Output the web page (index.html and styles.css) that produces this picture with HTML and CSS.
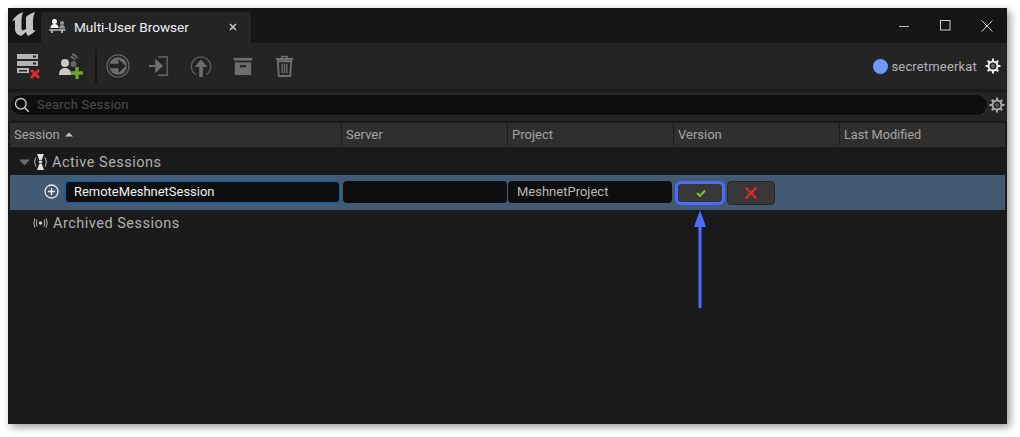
FILE: index.html
```html
<!DOCTYPE html>
<html lang="en">
<head>
<meta charset="utf-8">
<title>Multi-User Browser</title>
<link rel="stylesheet" href="styles.css">
</head>
<body>
<div class="window">
  <div class="titlebar">
    <svg class="ue-logo" width="26" height="26" viewBox="0 0 26 26"><path d="M1 11C3 6 7 3 12 1C11 4 10.500 6 10.500 9V17C10.500 19 11.500 20 13 19L15 18V6C17 4 20 2 24 1C23 4 22 6 22 9V18C22 19 23 20 25 19C23 22 19 24 17 25C16 24 15.500 23 15 21C13 23 11 24 10 25C5 23 4 21 4 17V9C3 9 2 10 1 11Z" fill="#c2c2c2"/></svg>
    <div class="tab">
      <svg class="tab-icon" width="18" height="18" viewBox="0 0 18 18"><circle cx="5.500" cy="3.500" r="2.500" fill="#fff"/><path d="M1.500 10c0-3 2-4 4-4s4 1 4 4z" fill="#fff"/><circle cx="13" cy="5" r="2" fill="#9a9a9a"/><path d="M10 10.500c0-2.500 1.500-3.500 3-3.500s3 1 3 3.500z" fill="#9a9a9a"/><path d="M0 12h16.500M3 12v3M13 12v3" stroke="#fff" stroke-width="1.200" fill="none"/></svg>
      <span class="tab-label">Multi-User Browser</span>
      <svg class="tab-close" width="8" height="8" viewBox="0 0 8 8"><path d="M1 1l6 6M7 1l-6 6" stroke="#c4c4c4" stroke-width="1.600"/></svg>
    </div>
    <div class="window-controls">
      <svg width="12" height="12" viewBox="0 0 12 12"><path d="M0 6.500h10" stroke="#bbb" stroke-width="1"/></svg>
      <svg width="12" height="12" viewBox="0 0 12 12"><rect x=".5" y=".5" width="9.500" height="9.500" fill="none" stroke="#ccc" stroke-width="1"/></svg>
      <svg width="12" height="12" viewBox="0 0 12 12"><path d="M.5.500l11 11M11.500.500l-11 11" stroke="#ccc" stroke-width="1"/></svg>
    </div>
  </div>
  <div class="toolbar">
    <svg class="tool t-first" width="26" height="26" viewBox="0 0 26 26"><g fill="#b4b4b4"><rect x="1" y="1" width="21" height="5"/><rect x="1" y="8" width="21" height="5"/><rect x="1" y="15" width="12" height="5"/></g><g fill="#242424"><rect x="17" y="2.500" width="3" height="2"/><rect x="17" y="9.500" width="3" height="2"/><rect x="3" y="17" width="8" height="1.500"/></g><path d="M15 17l8 8M23 17l-8 8" stroke="#e02b2b" stroke-width="2.800"/></svg>
    <svg class="tool t-second" width="26" height="26" viewBox="0 0 26 26"><path d="M14 1.500c2.500 0 4.500 1.500 5 4M12.500 4c2 0 3.500 1 4 3" stroke="#666" stroke-width="2" fill="none"/><circle cx="15.500" cy="11" r="3" fill="#666"/><circle cx="7" cy="10" r="4" fill="#c8c8c8"/><path d="M1 22c0-5 2.500-7 6-7s6 2 6 7z" fill="#c8c8c8"/><path d="M19 14v12M13 20h12" stroke="#6aa632" stroke-width="3.400"/></svg>
    <span class="tool-sep"></span>
    <svg class="tool t-go" width="24" height="24" viewBox="0 0 26 26"><circle cx="13" cy="13" r="12" fill="none" stroke="#5f5f5f" stroke-width="1.500"/><circle cx="13" cy="13" r="9.500" fill="#6e6e6e"/><path d="M4 10.500h9.500V5.500l8 7.500-8 7.500v-5H4z" fill="#242424"/></svg>
    <svg class="tool t-join" width="22" height="24" viewBox="0 0 24 26"><path d="M1 13h11M9 7.500l6 5.500-6 5.500z" fill="#6e6e6e" stroke="#6e6e6e" stroke-width="2.200"/><path d="M11 3h10v20H11" fill="none" stroke="#5c5c5c" stroke-width="1.800"/></svg>
    <svg class="tool t-up" width="22" height="24" viewBox="0 0 24 26"><path d="M6.500 22.500a10.500 10.500 0 1 1 11 0" fill="none" stroke="#5c5c5c" stroke-width="1.600"/><path d="M12 6l7 8h-5v11h-4V14H5z" fill="#6e6e6e"/></svg>
    <svg class="tool t-archive" width="20" height="20" viewBox="0 0 22 22"><rect x="1" y="2" width="20" height="3" fill="#6e6e6e"/><path d="M2 7h18v14H2z" fill="#6e6e6e"/><rect x="7.500" y="10" width="7" height="2.500" fill="#242424"/></svg>
    <svg class="tool t-trash" width="19" height="23" viewBox="0 0 20 24"><path d="M7 3V1.500h6V3" fill="none" stroke="#6e6e6e" stroke-width="1.500"/><path d="M1 3h18v2.500H1z" fill="#6e6e6e"/><path d="M3 6.500h14l-1 15.500H4z" fill="none" stroke="#6e6e6e" stroke-width="2"/><path d="M7.500 9v10M10 9v10M12.500 9v10" stroke="#6e6e6e" stroke-width="1.500"/></svg>
    <div class="user">
      <span class="user-dot"></span>
      <span class="user-name">secretmeerkat</span>
      <svg class="gear" width="16" height="16" viewBox="0 0 16 16"><circle cx="8" cy="8" r="4.500" fill="none" stroke="#ececec" stroke-width="2"/><circle cx="8" cy="8" r="2" fill="#666"/><path d="M8 .5v3M8 12.500v3M.5 8h3M12.500 8h3M2.700 2.700l2.100 2.100M11.200 11.200l2.100 2.100M13.300 2.700l-2.100 2.100M4.800 11.200l-2.100 2.100" stroke="#ececec" stroke-width="2"/></svg>
    </div>
  </div>
  <div class="search-row">
    <div class="search">
      <svg width="16" height="16" viewBox="0 0 16 16"><circle cx="6.800" cy="6.800" r="5.300" fill="none" stroke="#c8c8c8" stroke-width="1.400"/><path d="M10.700 10.700l4 4" stroke="#c8c8c8" stroke-width="1.600"/></svg>
      <span class="search-text">Search Session</span>
    </div>
    <svg class="gear" width="16" height="16" viewBox="0 0 16 16"><circle cx="8" cy="8" r="4.500" fill="none" stroke="#a8a8a8" stroke-width="2"/><circle cx="8" cy="8" r="2" fill="#555"/><path d="M8 .5v3M8 12.500v3M.5 8h3M12.500 8h3M2.700 2.700l2.100 2.100M11.200 11.200l2.100 2.100M13.300 2.700l-2.100 2.100M4.800 11.200l-2.100 2.100" stroke="#a8a8a8" stroke-width="2"/></svg>
  </div>
  <div class="table">
    <div class="head">
      <div class="hcell hcell-first">Session <svg class="sort" width="8" height="5" viewBox="0 0 8 5"><path d="M0 4.500L4 .5l4 4z" fill="#c0c0c0"/></svg></div>
      <div class="hcell">Server</div>
      <div class="hcell">Project</div>
      <div class="hcell">Version</div>
      <div class="hcell hcell-last">Last Modified</div>
    </div>
    <div class="group">
      <svg class="caret" width="11" height="7" viewBox="0 0 11 7"><path d="M0 .5h11L5.500 6.500z" fill="#6a6a6a"/></svg>
      <svg class="group-icon" width="15" height="18" viewBox="0 0 15 18"><path d="M4 1h7L8.800 7H6.200zM4 17h7L8.800 11H6.200z" fill="#e0e0e0"/><circle cx="7.500" cy="9" r="1.800" fill="#ccc"/><path d="M3 4.500Q.5 9 3 13.500M12 4.500q2.500 4.500 0 9" fill="none" stroke="#aaa" stroke-width="1.100"/></svg>
      <span>Active Sessions</span>
    </div>
    <div class="session">
      <div class="cell cell-first">
        <svg class="add" width="15" height="15" viewBox="0 0 15 15"><circle cx="7.500" cy="7.500" r="6.500" fill="none" stroke="#f0f0f0" stroke-width="1.300"/><path d="M7.500 4v7M4 7.500h7" stroke="#f0f0f0" stroke-width="1.300"/></svg>
        <div class="field field-active">RemoteMeshnetSession</div>
      </div>
      <div class="cell cell-server"><div class="field"></div></div>
      <div class="cell cell-project"><div class="field field-project">MeshnetProject</div></div>
      <div class="cell cell-actions">
        <button class="btn btn-ok"><svg width="10" height="8" viewBox="0 0 10 8"><path d="M1 4l3 3 5-5.500" fill="none" stroke="#7fb83f" stroke-width="2"/></svg></button>
        <button class="btn btn-no"><svg width="12" height="12" viewBox="0 0 12 12"><path d="M.5.500l11 11M11.500.500l-11 11" stroke="#e8282b" stroke-width="2.200"/></svg></button>
      </div>
    </div>
    <div class="group group-archived">
      <svg class="group-icon" width="15" height="10" viewBox="0 0 15 10"><circle cx="7.500" cy="5" r="1.800" fill="#ccc"/><path d="M4 1.500Q2.500 5 4 8.500M11 1.500q1.500 3.500 0 7M1.800 .5Q-.2 5 1.800 9.500M13.200 .5q2 4.500 0 9" fill="none" stroke="#bbb" stroke-width="1"/></svg>
      <span>Archived Sessions</span>
    </div>
  </div>
  <svg class="arrow" width="12" height="98" viewBox="0 0 12 98"><path d="M6 0l6 17H0z" fill="#4a6cff"/><path d="M6 14v84" stroke="#4a6cff" stroke-width="3"/></svg>
</div>
</body>
</html>
```

FILE: styles.css
```css
* { box-sizing: border-box; }
html, body { margin: 0; height: 100%; background: #fff; overflow: hidden; }
body { padding: 8px 13px 13px 8px; font-family: Roboto, "Liberation Sans", sans-serif; }
.window { position: relative; width: 999px; height: 416px; background: #1a1a1a; box-shadow: 3px 3px 8px rgba(0,0,0,.4); display: flex; flex-direction: column; }
.titlebar { height: 35px; background: #151515; display: flex; align-items: flex-end; flex: none; }
.ue-logo { margin: 0 4px 6px 3px; flex: none; }
.tab { width: 210px; height: 31px; background: #242424; border-radius: 4px 4px 0 0; display: flex; align-items: center; padding: 0 14px 2px 8px; color: #f0f0f0; font-size: 13.600px; }
.tab-icon { margin-right: 7px; }
.tab-label { flex: 1; }
.window-controls { margin-left: auto; align-self: center; display: flex; gap: 29px; padding-right: 14px; align-items: center; }
.toolbar { height: 46px; background: #242424; display: flex; align-items: center; padding-left: 8px; flex: none; }
.tool { flex: none; }
.t-second { margin-left: 16px; }
.tool-sep { width: 2px; height: 35px; background: #161616; margin: 0 9px 0 11px; }
.t-go { margin-right: 18px; }
.t-join { margin-right: 20px; }
.t-up { margin-right: 21px; }
.t-archive { margin-right: 22px; }
.user { margin-left: auto; display: flex; align-items: center; padding-right: 6px; }
.user-dot { width: 15px; height: 15px; border-radius: 50%; background: #6c98ff; margin-left: 1px; margin-right: 3px; }
.user-name { color: #b4b4b4; font-size: 13px; letter-spacing: .17px; margin-right: 8px; }
.search-row { height: 29px; flex: none; margin-top: 3px; background: #242424; display: flex; align-items: center; padding: 0 2px 4px 2px; gap: 1px; }
.search { flex: 1; height: 22px; border-radius: 11px; background: #0e0e0e; border: 1px solid #2c2c2c; display: flex; align-items: center; padding-left: 3px; gap: 7px; }
.search-text { color: #4d4d4d; font-size: 13px; letter-spacing: .2px; }
.table { padding: 2px 2px 0 2px; }
.head { height: 24px; background: #2f2f2f; display: grid; grid-template-columns: 331px 166px 166px 166px 166px; padding-bottom: 2px; }
.hcell { color: #a4a4a4; font-size: 13px; padding-left: 4px; display: flex; align-items: center; gap: 5px; border-left: 1px solid #1a1a1a; }
.hcell-first { border-left: 0; }
.hcell-last { font-size: 12.700px; }
.group { height: 28px; display: flex; align-items: center; color: #b0b0b0; font-size: 14.500px; letter-spacing: .5px; padding: 2px 0 0 9px; gap: 3px; }
.group-icon { margin-right: 1px; }
.group-archived { padding: 0 0 2px 23px; gap: 4px; }
.caret { flex: none; }
.session { height: 35px; background: #435a74; display: grid; grid-template-columns: 331px 166px 166px 332px; align-items: center; }
.cell { display: flex; align-items: center; height: 100%; padding-bottom: 2px; }
.cell-first { padding-left: 34px; gap: 6px; padding-right: 1px; }
.field { height: 22px; flex: 1; background: #0e0e0e; border-radius: 4px; display: flex; align-items: center; font-size: 13px; color: #b8b8b8; padding-left: 8px; }
.field-active { color: #f0f0f0; border: 1px solid #0a5fb4; font-size: 12.950px; }
.cell-server { padding-left: 2px; }
.cell-project { padding-left: 1px; padding-right: 1px; }
.field-project { padding-left: 9px; }
.btn { height: 24px; padding: 0; background: #383838; border-radius: 4px; display: flex; align-items: center; justify-content: center; }
.btn-ok { width: 50px; border: 3px solid #4a6cff; border-radius: 6px; padding-left: 2px; }
.btn-no { width: 48px; border: 1px solid #262626; margin-left: 2px; }
.cell-actions { padding: 0 0 0 2px; }
.arrow { position: absolute; left: 686px; top: 202px; }
```
